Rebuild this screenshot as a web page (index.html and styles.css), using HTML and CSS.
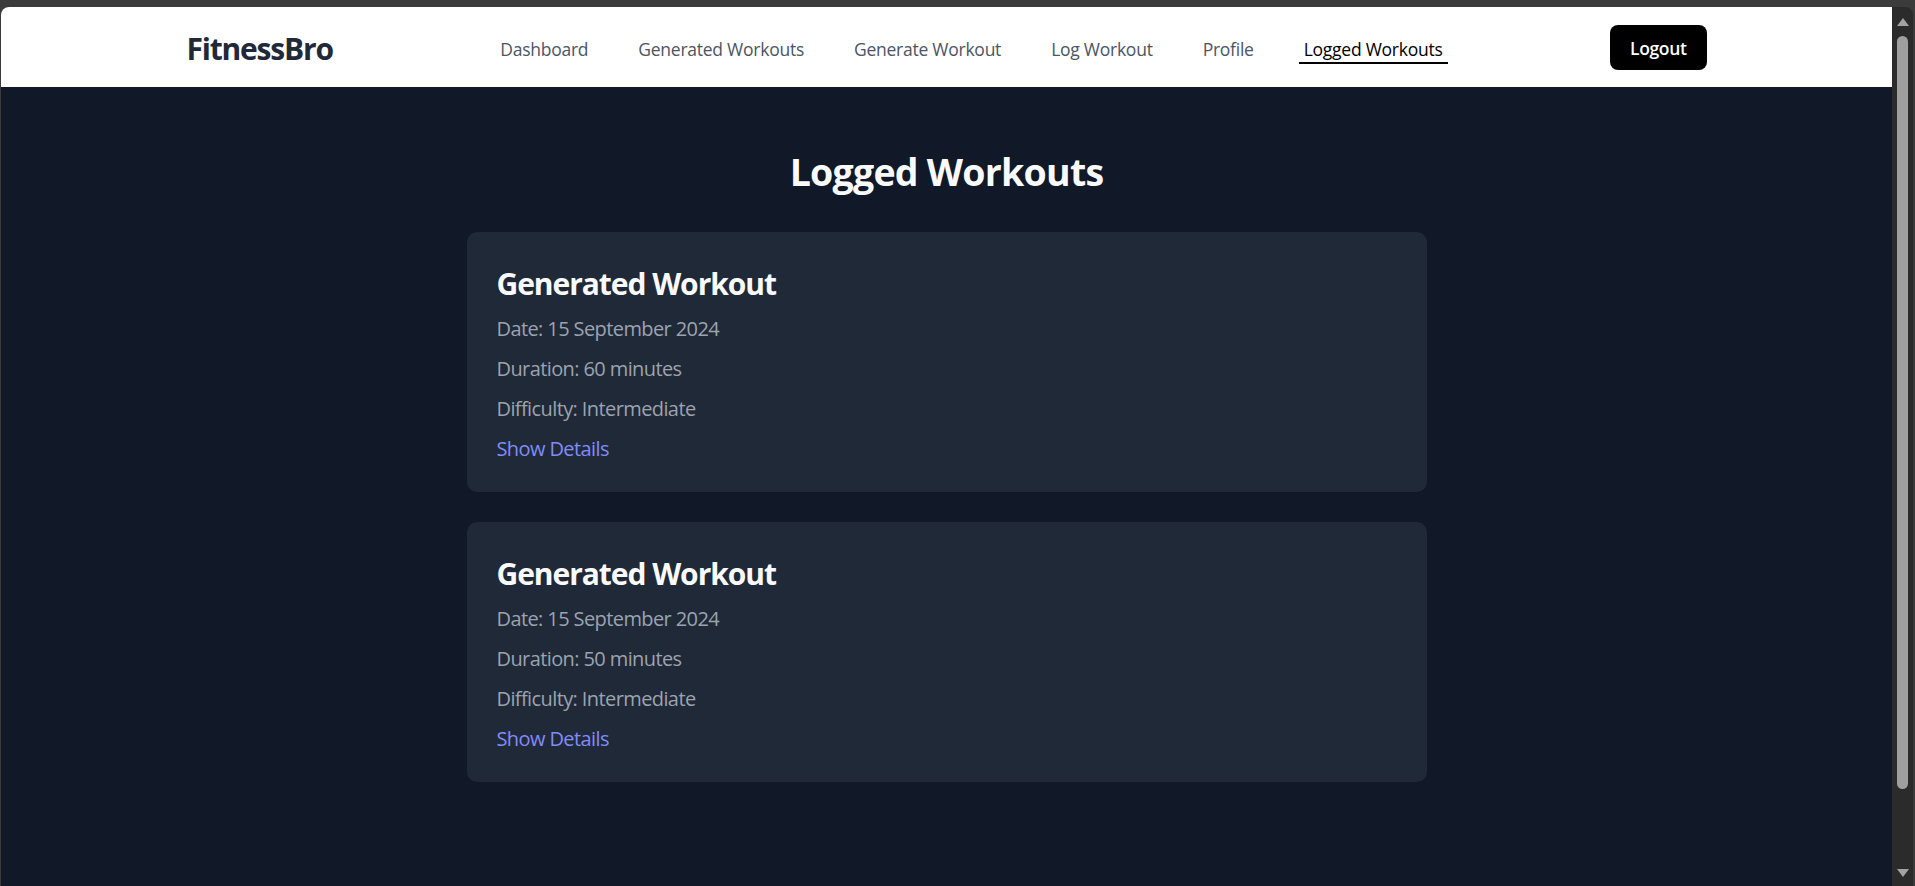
FILE: index.html
```html
<!DOCTYPE html>
<html lang="en">
<head>
<meta charset="utf-8">
<title>FitnessBro - Logged Workouts</title>
<link rel="stylesheet" href="styles.css">
</head>
<body>
<div class="frame">
  <div class="viewport">
    <header class="header">
      <div class="header-inner">
        <div class="logo">FitnessBro</div>
        <nav class="nav">
          <a class="nav-link" href="#">Dashboard</a>
          <a class="nav-link" href="#">Generated Workouts</a>
          <a class="nav-link" href="#">Generate Workout</a>
          <a class="nav-link" href="#">Log Workout</a>
          <a class="nav-link" href="#">Profile</a>
          <a class="nav-link active" href="#">Logged Workouts</a>
        </nav>
        <button class="logout">Logout</button>
      </div>
    </header>
    <main class="main">
      <div class="container">
        <h1 class="page-title">Logged Workouts</h1>
        <div class="card">
          <h2 class="card-title">Generated Workout</h2>
          <p class="card-line">Date: 15 September 2024</p>
          <p class="card-line">Duration: 60 minutes</p>
          <p class="card-line">Difficulty: Intermediate</p>
          <a class="details" href="#">Show Details</a>
        </div>
        <div class="card">
          <h2 class="card-title">Generated Workout</h2>
          <p class="card-line">Date: 15 September 2024</p>
          <p class="card-line">Duration: 50 minutes</p>
          <p class="card-line">Difficulty: Intermediate</p>
          <a class="details" href="#">Show Details</a>
        </div>
      </div>
    </main>
  </div>
  <div class="scrollbar">
    <div class="arrow-up"></div>
    <div class="thumb"></div>
    <div class="spacer"></div>
    <div class="arrow-down"></div>
  </div>
</div>
</body>
</html>
```
FILE: styles.css
```css
* { box-sizing: border-box; }
html, body {
  margin: 0;
  padding: 0;
  height: 886px;
  overflow: hidden;
}
body {
  background: #3b3b3b;
  font-family: "Open Sans", "Noto Sans", sans-serif;
}
.frame {
  display: flex;
  height: 879px;
  margin-top: 7px;
  margin-left: 1px;
  margin-right: 2px;
}
.viewport {
  flex: 1;
  background: #111827;
  border-top-left-radius: 8px;
  overflow: hidden;
}
.header {
  background: #ffffff;
  height: 80px;
}
.header-inner {
  max-width: 1600px;
  margin: 0 auto;
  padding: 0 40px;
  height: 100%;
  display: flex;
  align-items: center;
  justify-content: space-between;
}
.logo {
  font-size: 30px;
  font-weight: 700;
  color: #1f2937;
  line-height: 40px;
  letter-spacing: -1.2px;
  padding-top: 3px;
}
.nav {
  display: flex;
  gap: 40px;
  align-items: center;
  padding-top: 7px;
}
.nav-link {
  font-size: 17.5px;
  line-height: 25px;
  color: #4b5563;
  text-decoration: none;
  letter-spacing: -0.25px;
  padding: 0 5px;
  border-bottom: 2.5px solid transparent;
}
.nav-link.active {
  color: #000000;
  border-bottom-color: #000000;
}
.logout {
  background: #000000;
  color: #ffffff;
  border: none;
  border-radius: 8px;
  font-family: inherit;
  font-size: 17.5px;
  font-weight: 600;
  line-height: 25px;
  letter-spacing: -0.35px;
  padding: 11.5px 20px 8.5px;
}
.main {
  padding: 61.5px 0 60px;
}
.container {
  max-width: 960px;
  margin: 0 auto;
}
.page-title {
  margin: 0 0 38.5px;
  text-align: center;
  font-size: 37.5px;
  line-height: 45px;
  font-weight: 700;
  color: #f9fafb;
  letter-spacing: -0.75px;
}
.card {
  background: #1f2937;
  border-radius: 10px;
  padding: 31.5px 30px 28.5px;
  margin-bottom: 30px;
}
.card-title {
  margin: 0 0 10px;
  font-size: 30px;
  line-height: 40px;
  font-weight: 700;
  color: #f9fafb;
  letter-spacing: -1.05px;
}
.card-line {
  margin: 0 0 10px;
  font-size: 20px;
  line-height: 30px;
  color: #9ca3af;
  letter-spacing: -0.6px;
}
.details {
  display: block;
  font-size: 20px;
  line-height: 30px;
  color: #818cf8;
  text-decoration: none;
  letter-spacing: -0.6px;
}
.scrollbar {
  width: 21px;
  background: #2b2b2b;
  border-top-right-radius: 8px;
  display: flex;
  flex-direction: column;
  align-items: center;
  padding: 11px 0 9px;
}
.arrow-up {
  width: 0;
  height: 0;
  border-left: 6px solid transparent;
  border-right: 6px solid transparent;
  border-bottom: 8px solid #a3a3a3;
}
.arrow-down {
  width: 0;
  height: 0;
  border-left: 6px solid transparent;
  border-right: 6px solid transparent;
  border-top: 8px solid #a3a3a3;
}
.thumb {
  margin-top: 10px;
  width: 11px;
  height: 753px;
  background: #9f9f9f;
  border-radius: 6px;
}
.spacer {
  flex: 1;
}
```
